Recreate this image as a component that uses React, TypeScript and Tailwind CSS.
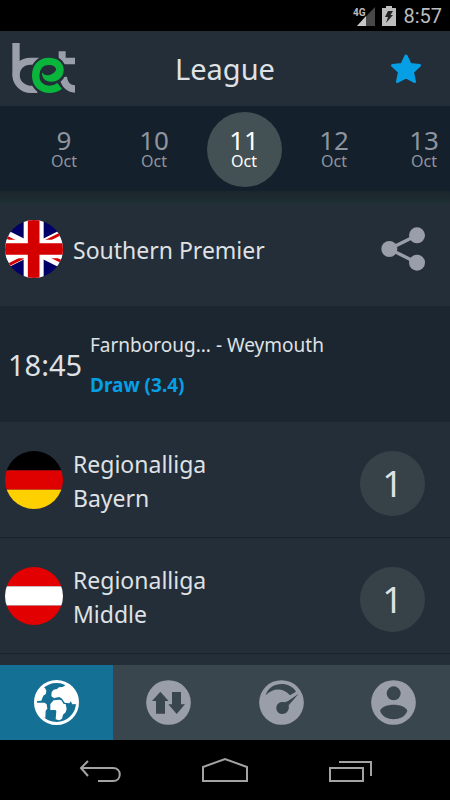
import type { ReactNode } from "react";

const DAYS = [9, 10, 11, 12, 13];
const SELECTED_DAY = 11;
const MONTH = "Oct";

type League = {
  name: string;
  flag: ReactNode;
  count: number;
};

const LEAGUES: League[] = [
  { name: "Regionalliga Bayern", flag: <StripedFlag colors={["#000000", "#df0000", "#ffd000"]} />, count: 1 },
  { name: "Regionalliga Middle", flag: <StripedFlag colors={["#e30000", "#ffffff", "#e30000"]} />, count: 1 },
];

function StripedFlag({ colors }: { colors: string[] }) {
  return (
    <svg className="size-[58px] shrink-0 rounded-full" viewBox="0 0 60 60" aria-hidden="true">
      {colors.map((color, i) => (
        <rect key={i} y={i * 20} width="60" height="20" fill={color} />
      ))}
    </svg>
  );
}

function UnionFlag() {
  return (
    <svg className="size-[58px] shrink-0 rounded-full" viewBox="15 44 174 174" aria-hidden="true">
      <rect x="15" y="44" width="174" height="174" fill="#000066" />
      <path d="M-19 71 L221 191 M-19 191 L221 71" stroke="#fff" strokeWidth="30" />
      <path d="M1 86 L81 126 M201 177 L121 137 M1 191 L81 151 M201 76 L121 116" stroke="#d40000" strokeWidth="9" />
      <path d="M101 44 V218" stroke="#fff" strokeWidth="60" />
      <path d="M15 131 H189" stroke="#fff" strokeWidth="56" />
      <path d="M101 44 V218 M15 131 H189" stroke="#d40000" strokeWidth="35" />
    </svg>
  );
}

function Logo() {
  return (
    <svg className="h-[51px] w-[63px]" viewBox="36 130 189 153" fill="none" role="img" aria-label="bet">
      <path d="M48 130 V226 A44 44 0 0 0 92 269 H112" stroke="#9b9faa" strokeWidth="22" />
      <path d="M48 230 C48 202 66 185 92 185 H118" stroke="#9b9faa" strokeWidth="21" />
      <path d="M176 155 H197 V174 H225 V194 H176 Z" fill="#9b9faa" />
      <path d="M190 232 C192 254 206 268 226 268" stroke="#9b9faa" strokeWidth="22" />
      <path
        d="M128 221 C134 247 180 242 180 213 C180 193 164 185 146 185 C120 185 107 205 107 228 C107 253 125 270 148 270 Q165 270 177 260"
        stroke="#242e38"
        strokeWidth="35"
      />
      <path
        d="M180 213 C180 193 164 185 146 185 C120 185 107 205 107 228 C107 253 125 269 148 269 Q166 269 179 259"
        stroke="#0ab53c"
        strokeWidth="22"
      />
      <path
        d="M126 218 C132 229 146 229 156 223 C165 218 169 212 169 204 L191 210 C191 232 174 246 153 246 C136 246 125 236 126 218 Z"
        fill="#0ab53c"
      />
    </svg>
  );
}

function StatusBar() {
  return (
    <div className="flex h-[31px] items-center justify-end bg-black pr-2 text-[#bdbdbd]">
      <svg className="h-5 w-[22px]" viewBox="0 0 22 20" aria-hidden="true">
        <path d="M4 20 L22 1 V20 Z" fill="#484848" />
        <path d="M4 20 L13 10 V20 Z" fill="#c8c8c8" />
        <text x="0" y="10" fill="#bdbdbd" fontFamily="Roboto, sans-serif" fontSize="10" fontWeight="700">
          4G
        </text>
      </svg>
      <svg className="ml-[7px] h-5 w-[14px]" viewBox="0 0 14 20" aria-hidden="true">
        <path d="M4 0 H10 V2 H14 V20 H0 V2 H4 Z" fill="currentColor" />
        <path d="M6 5 H11 L8.500 9 H11 L4 17 L6 11 H3 Z" fill="#222" />
      </svg>
      <span className="ml-[7px] font-[Roboto,sans-serif] text-xl leading-6">8:57</span>
    </div>
  );
}

function Header() {
  return (
    <header className="grid h-[75px] grid-cols-3 items-center bg-[#242e38] pr-7 pl-3">
      <Logo />
      <h1 className="justify-self-center pl-4 text-[29px] leading-9">League</h1>
      <button type="button" className="justify-self-end" aria-label="Favourites">
        <svg className="size-8" viewBox="0 0 32 32" aria-hidden="true">
          <path
            d="M16 3 L20 11.500 L29.500 12.500 L22.500 19 L24.500 28.500 L16 24 L7.500 28.500 L9.500 19 L2.500 12.500 L12 11.500 Z"
            fill="#069fe6"
            stroke="#069fe6"
            strokeWidth="3"
            strokeLinejoin="round"
          />
        </svg>
      </button>
    </header>
  );
}

function DateStrip() {
  return (
    <nav className="relative flex h-[85px] overflow-hidden border-t border-[#17212b] bg-[#14202b] pl-[19px]" aria-label="Dates">
      {DAYS.map((day) => (
        <div key={day} className="flex w-[90px] shrink-0 items-center justify-center">
          <button
            type="button"
            aria-pressed={day === SELECTED_DAY}
            className={
              day === SELECTED_DAY
                ? "flex size-[75px] flex-col items-center justify-center rounded-full bg-[#435054] text-white"
                : "flex size-[75px] flex-col items-center justify-center text-[#8f949f]"
            }
          >
            <span className="text-[26px] leading-[23px]">{day}</span>
            <span className="text-base leading-[18px]">{MONTH}</span>
          </button>
        </div>
      ))}
    </nav>
  );
}

function MatchRow() {
  return (
    <div className="flex h-[116px] items-center bg-[#1c2630] pt-[2px] pl-2">
      <time className="w-[82px] shrink-0 text-[29px] leading-9">18:45</time>
      <div>
        <p className="text-[19px] leading-10">Farnboroug... - Weymouth</p>
        <p className="text-[19px] leading-10 font-bold text-[#069fe6]">Draw (3.4)</p>
      </div>
    </div>
  );
}

function LeagueRow({ league }: { league: League }) {
  return (
    <li className="flex h-[116px] items-center border-b border-[#19232d] pr-[25px] pl-[5px]">
      {league.flag}
      <h2 className="ml-[10px] w-[160px] pt-[2px] text-[23px] leading-[34px]">{league.name}</h2>
      <span className="mt-2 ml-auto flex size-[65px] items-center justify-center rounded-full bg-[#364248] text-4xl">
        {league.count}
      </span>
    </li>
  );
}

function GlobeIcon() {
  return (
    <svg className="size-[45px]" viewBox="101 90 135 135" aria-hidden="true">
      <circle cx="168.500" cy="157.500" r="63" fill="none" stroke="currentColor" strokeWidth="9" />
      <path
        fill="currentColor"
        d="M106 140 L117 116 L126 111 L134 114 L138 122 L137 131 L129 137 L125 147 L123 152 L110 153 L110 158 L133 158 L139 163 L141 176 L136 182 L135 204 L116 195 L104 170 Z"
      />
      <path
        fill="currentColor"
        d="M153 139 L154 126 L160 119 L170 117 L176 112 L187 111 L196 105 L194 98 L216 110 L232 138 L232 162 L216 163 L211 154 L207 160 L193 158 L185 146 L177 141 L165 143 L162 145 Z"
      />
      <path
        fill="currentColor"
        d="M150 162 L160 151 L176 149 L183 151 L190 162 L196 162 L199 177 L196 187 L188 194 L185 206 L177 211 L166 208 L168 183 L165 180 L150 180 Z"
      />
    </svg>
  );
}

function ArrowsIcon() {
  return (
    <svg className="size-[45px]" viewBox="438 90 135 135" aria-hidden="true">
      <circle cx="505.500" cy="157.500" r="67" fill="currentColor" />
      <path
        fill="#3a464d"
        d="M481 125 L506 153 H495 V191 H468 V153 H456 Z M516 126 H543 V163 H555 L530 192 L505 163 H516 Z"
      />
    </svg>
  );
}

function GaugeIcon() {
  return (
    <svg className="size-[45px]" viewBox="101 90 135 135" aria-hidden="true">
      <circle cx="168.500" cy="157.500" r="67" fill="currentColor" />
      <path fill="#3a464d" d="M121 136 C132 95 192 91 212 125 L194 136 C174 112 143 113 121 136 Z" />
      <path fill="#3a464d" d="M220 131 L190 166 C193 180 185 192 171 192 C160 192 153 184 153 174 C153 161 165 153 177 157 L187 154 Z" />
    </svg>
  );
}

function UserIcon() {
  return (
    <svg className="size-[45px]" viewBox="438 90 135 135" aria-hidden="true">
      <circle cx="505.500" cy="157.500" r="67" fill="currentColor" />
      <circle cx="506" cy="130" r="21" fill="#3a464d" />
      <path fill="#3a464d" d="M465 182 C474 158 538 158 547 182 C536 216 476 216 465 182 Z" />
    </svg>
  );
}

const TABS = [
  { label: "Leagues", icon: <GlobeIcon /> },
  { label: "Transfers", icon: <ArrowsIcon /> },
  { label: "Statistics", icon: <GaugeIcon /> },
  { label: "Profile", icon: <UserIcon /> },
];

function TabBar() {
  return (
    <nav className="grid h-[75px] grid-cols-4 bg-[#3a464d]" aria-label="Sections">
      {TABS.map((tab, i) => (
        <button
          key={tab.label}
          type="button"
          aria-label={tab.label}
          className={
            i === 0
              ? "flex items-center justify-center bg-[#157096] text-white"
              : "flex items-center justify-center text-[#9a9ea9]"
          }
        >
          {tab.icon}
        </button>
      ))}
    </nav>
  );
}

function SystemBar() {
  return (
    <div className="grid h-[60px] grid-cols-[1fr_75px_1fr] items-center bg-black px-3 text-[#a3a3a3]">
      <button type="button" className="justify-self-center" aria-label="Back">
        <svg className="h-[26px] w-[42px]" viewBox="0 0 42 26" fill="none" stroke="currentColor" strokeWidth="2" aria-hidden="true">
          <path d="M9 4 L2 11 L9 19 M2 11 H34 C43 11 43 24 34 24 H19" />
        </svg>
      </button>
      <button type="button" className="justify-self-center" aria-label="Home">
        <svg className="h-[26px] w-[46px]" viewBox="0 0 46 26" fill="none" stroke="currentColor" strokeWidth="2" aria-hidden="true">
          <path d="M1 24 V10 L23 2 L45 10 V24 Z" />
        </svg>
      </button>
      <button type="button" className="justify-self-center" aria-label="Recent apps">
        <svg className="h-[26px] w-[43px]" viewBox="0 0 43 26" fill="none" stroke="currentColor" strokeWidth="2" aria-hidden="true">
          <path d="M1 11 H34 V24 H1 Z M10 5 H42 V19" />
        </svg>
      </button>
    </div>
  );
}

export default function App() {
  return (
    <div className="flex min-h-screen flex-col bg-[#242e38] font-['Noto_Sans',sans-serif] text-[#dfe1e5]">
      <StatusBar />
      <Header />
      <DateStrip />
      <main className="flex-1">
        <div className="h-[13px] bg-linear-to-b from-[#1b252d] to-[#1f3033]" />
        <section className="-mt-[14px] flex h-[116px] items-center pt-[2px] pr-[25px] pl-[5px]">
          <UnionFlag />
          <h2 className="ml-[10px] pt-[2px] text-[23px] leading-[34px]">Southern Premier</h2>
          <button type="button" className="ml-auto text-[#9a9ea9]" aria-label="Share">
            <svg className="size-11" viewBox="123 65 132 132" aria-hidden="true">
              <path d="M231 90 L148 131 L231 172" fill="none" stroke="currentColor" strokeWidth="10" />
              <circle cx="231" cy="90" r="24" fill="currentColor" />
              <circle cx="148" cy="131" r="24" fill="currentColor" />
              <circle cx="231" cy="172" r="24" fill="currentColor" />
            </svg>
          </button>
        </section>
        <MatchRow />
        <ul>
          {LEAGUES.map((league) => (
            <LeagueRow key={league.name} league={league} />
          ))}
        </ul>
      </main>
      <TabBar />
      <SystemBar />
    </div>
  );
}
